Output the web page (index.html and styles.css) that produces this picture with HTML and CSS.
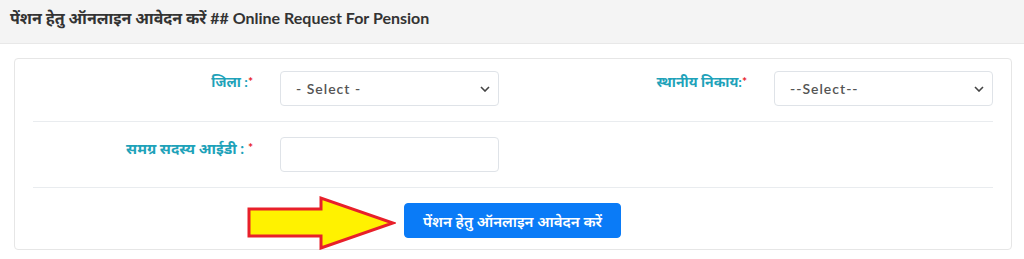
FILE: index.html
```html
<!DOCTYPE html>
<html lang="hi">
<head>
<meta charset="utf-8">
<title>Online Request For Pension</title>
<link rel="stylesheet" href="styles.css">
</head>
<body>
<div class="page-head">
  <h1 class="page-title">पेंशन हेतु ऑनलाइन आवेदन करें ## Online Request For Pension</h1>
</div>
<div class="card">
  <div class="form-row">
    <label class="lbl">जिला :<span class="req">*</span></label>
    <div class="field">
      <select class="ctrl">
        <option>- Select -</option>
      </select>
    </div>
    <label class="lbl">स्थानीय निकाय:<span class="req">*</span></label>
    <div class="field">
      <select class="ctrl">
        <option>--Select--</option>
      </select>
    </div>
  </div>
  <hr class="sep">
  <div class="form-row">
    <label class="lbl lbl-wide">समग्र सदस्य आईडी : <span class="req">*</span></label>
    <div class="field">
      <input class="ctrl" type="text">
    </div>
  </div>
  <hr class="sep">
  <div class="action-row">
    <svg class="arrow" width="150" height="56" viewBox="0 0 150 56" aria-hidden="true">
      <polygon points="3,14 75,14 75,3 147,28 75,53 75,41 3,41" fill="#fff200" stroke="#e8202a" stroke-width="3" stroke-linejoin="miter"/>
    </svg>
    <button class="btn" type="button">पेंशन हेतु ऑनलाइन आवेदन करें</button>
  </div>
</div>
</body>
</html>
```
FILE: styles.css
```css
* { box-sizing: border-box; }
html, body { margin: 0; padding: 0; background: #fff; }
body {
  font-family: "Lato", "Noto Sans", "Noto Sans Devanagari", sans-serif;
  color: #333;
  width: 1024px;
}
.page-head {
  height: 44px;
  background: #f4f4f4;
  border-bottom: 1px solid #e8e8e8;
  padding: 0 10px;
  display: flex;
  align-items: center;
}
.page-title {
  margin: 0;
  font-size: 16px;
  font-weight: 700;
  color: #333;
  line-height: 20px;
  margin-top: -7px;
}
.card {
  margin: 14px 12px 0 14px;
  border: 1px solid #e6e6e6;
  border-radius: 4px;
  padding: 12px 18px 11px 18px;
  height: 192px;
}
.form-row {
  display: grid;
  grid-template-columns: 247px 219px 275px 219px;
  align-items: start;
}
.lbl {
  text-align: right;
  padding-right: 27px;
  padding-top: 1px;
  font-size: 14px;
  font-weight: 700;
  color: #1ea2b9;
  line-height: 20px;
}
.lbl-wide { font-size: 15px; }
.req { color: #e8202a; font-size: 12px; vertical-align: top; }
.ctrl {
  display: block;
  width: 219px;
  height: 35px;
  border: 1px solid #dfe3e8;
  border-radius: 4px;
  background: #fff;
  font-family: "Lato", "Noto Sans", sans-serif;
  font-size: 14px;
  color: #555;
  padding: 0 12px;
}
select.ctrl {
  appearance: none;
  -webkit-appearance: none;
  background-image: url("data:image/svg+xml,%3Csvg xmlns='http://www.w3.org/2000/svg' width='10' height='6' viewBox='0 0 10 6'%3E%3Cpath d='M1 1l4 4 4-4' fill='none' stroke='%23444' stroke-width='1.6'/%3E%3C/svg%3E");
  background-repeat: no-repeat;
  background-position: right 8px center;
  padding-left: 15px;
  letter-spacing: 1px;
  font-weight: 600;
}
.sep {
  border: 0;
  border-top: 1px solid #e9ecef;
  margin: 15px 0 15px 0;
}
.action-row {
  display: flex;
  align-items: center;
  padding-left: 213px;
  margin-top: -8px;
}
.arrow { display: block; margin-right: 8px; }
.btn {
  height: 35px;
  width: 217px;
  background: #0a7bf7;
  color: #fff;
  border: 1px solid #0a7bf7;
  border-radius: 4px;
  font-family: "Lato", "Noto Sans", sans-serif;
  font-size: 15px;
  font-weight: 600;
  padding: 0 12px;
  margin-top: -5px;
}
```
